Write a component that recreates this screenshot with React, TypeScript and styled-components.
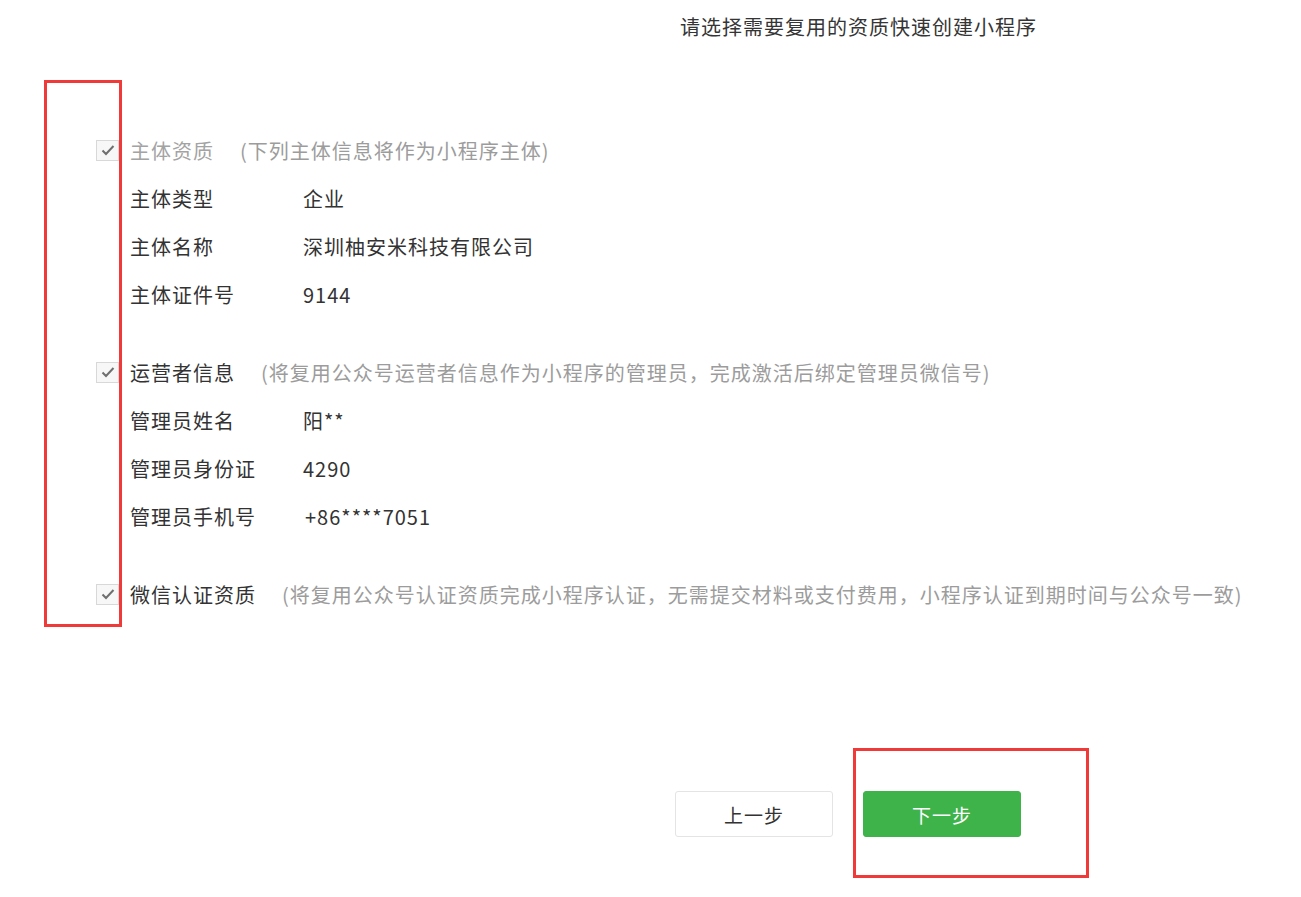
import React from "react";
import styled, { createGlobalStyle } from "styled-components";

const GlobalStyle = createGlobalStyle`
  html, body {
    margin: 0;
    padding: 0;
    background: #ffffff;
  }
  body {
    font-family: "Noto Sans CJK SC", "Liberation Sans", sans-serif;
    color: #353535;
  }
`;

const sections = [
  {
    title: "主体资质",
    note: "(下列主体信息将作为小程序主体)",
    disabled: true,
    rows: [
      { label: "主体类型", value: "企业" },
      { label: "主体名称", value: "深圳柚安米科技有限公司" },
      { label: "主体证件号", value: "9144" },
    ],
  },
  {
    title: "运营者信息",
    note: "(将复用公众号运营者信息作为小程序的管理员，完成激活后绑定管理员微信号)",
    disabled: false,
    rows: [
      { label: "管理员姓名", value: "阳**" },
      { label: "管理员身份证", value: "4290" },
      { label: "管理员手机号", value: "+86****7051", indent: 2 },
    ],
  },
  {
    title: "微信认证资质",
    note: "(将复用公众号认证资质完成小程序认证，无需提交材料或支付费用，小程序认证到期时间与公众号一致)",
    disabled: false,
    rows: [],
  },
];

const Page = styled.div`
  position: relative;
  width: 1301px;
  min-height: 897px;
  display: flex;
  flex-direction: column;
`;

const Title = styled.div`
  margin: 3px 0 0 680px;
  height: 48px;
  line-height: 48px;
  font-size: 20px;
  letter-spacing: 1px;
  color: #353535;
  white-space: nowrap;
`;

const SectionList = styled.div`
  margin-top: 75px;
  display: flex;
  flex-direction: column;
  gap: 30px;
`;

const Section = styled.div`
  display: flex;
  flex-direction: column;
`;

const Header = styled.div`
  display: flex;
  align-items: center;
  height: 48px;
  padding-left: 96px;
  white-space: nowrap;
`;

const Box = styled.span`
  width: 21px;
  height: 19px;
  border: 1px solid #d8d8d8;
  background: #f7f7f7;
  display: flex;
  align-items: center;
  justify-content: center;
  margin-right: 11px;
`;

const HeaderTitle = styled.span<{ $disabled?: boolean }>`
  font-size: 20px;
  letter-spacing: 1px;
  color: ${(p) => (p.$disabled ? "#a3a3a3" : "#333333")};
`;

const Note = styled.span`
  margin-left: 26px;
  font-size: 20px;
  letter-spacing: 1px;
  color: #9c9c9c;
`;

const Row = styled.div`
  display: flex;
  align-items: center;
  height: 48px;
  padding-left: 130px;
  font-size: 20px;
  letter-spacing: 1px;
  color: #333333;
`;

const Label = styled.span`
  width: 173px;
  flex-shrink: 0;
`;

const Value = styled.span<{ $indent?: number }>`
  white-space: nowrap;
  padding-left: ${(p) => p.$indent ?? 0}px;
`;

const Actions = styled.div`
  margin: 173px 0 0 675px;
  display: flex;
  gap: 30px;
`;

const Button = styled.button<{ $primary?: boolean }>`
  width: 158px;
  height: 46px;
  border-radius: 3px;
  font-family: "Noto Sans CJK SC", sans-serif;
  font-size: 19px;
  letter-spacing: 1px;
  cursor: pointer;
  border: 1px solid ${(p) => (p.$primary ? "#3eb34a" : "#e4e4e4")};
  background: ${(p) => (p.$primary ? "#3eb34a" : "#ffffff")};
  color: ${(p) => (p.$primary ? "#ffffff" : "#333333")};
`;

const Mark = styled.div<{ $l: number; $t: number; $w: number; $h: number }>`
  position: absolute;
  left: ${(p) => p.$l}px;
  top: ${(p) => p.$t}px;
  width: ${(p) => p.$w}px;
  height: ${(p) => p.$h}px;
  border: 3px solid #f03a3a;
  box-sizing: border-box;
  pointer-events: none;
`;

const Check = () => (
  <svg width="14" height="12" viewBox="0 0 14 12">
    <path d="M1.5 6.5 L5 10 L12.5 2" fill="none" stroke="#6f6f6f" strokeWidth="2" />
  </svg>
);

export default function App() {
  return (
    <Page>
      <GlobalStyle />
      <Title>请选择需要复用的资质快速创建小程序</Title>
      <SectionList>
        {sections.map((s) => (
          <Section key={s.title}>
            <Header>
              <Box>
                <Check />
              </Box>
              <HeaderTitle $disabled={s.disabled}>{s.title}</HeaderTitle>
              <Note>{s.note}</Note>
            </Header>
            {s.rows.map((r) => (
              <Row key={r.label}>
                <Label>{r.label}</Label>
                <Value $indent={r.indent}>{r.value}</Value>
              </Row>
            ))}
          </Section>
        ))}
      </SectionList>
      <Actions>
        <Button>上一步</Button>
        <Button $primary>下一步</Button>
      </Actions>
      <Mark $l={44} $t={80} $w={78} $h={547} />
      <Mark $l={853} $t={748} $w={236} $h={130} />
    </Page>
  );
}
